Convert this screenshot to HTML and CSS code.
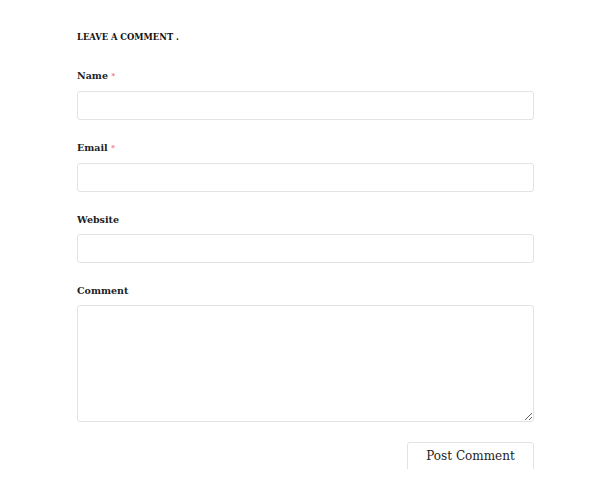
FILE: index.html
```html
<!DOCTYPE html>
<html>
<head>
<meta charset="utf-8">
<link rel="stylesheet" href="styles.css">
</head>
<body>
<div class="page">
  <form class="comment-form">
    <h3 class="title">LEAVE A COMMENT .</h3>
    <div class="field">
      <label class="label">Name <span class="req">*</span></label>
      <input class="input" type="text">
    </div>
    <div class="field">
      <label class="label">Email <span class="req">*</span></label>
      <input class="input" type="text">
    </div>
    <div class="field">
      <label class="label">Website</label>
      <input class="input" type="text">
    </div>
    <div class="field">
      <label class="label">Comment</label>
      <textarea class="textarea"></textarea>
    </div>
    <div class="actions">
      <button class="submit" type="button">Post Comment</button>
    </div>
  </form>
</div>
</body>
</html>
```
FILE: styles.css
```css
html, body {
  margin: 0;
  padding: 0;
  background: #ffffff;
}
.page {
  padding: 29px 66px 0 77px;
  height: 440px;
  overflow: hidden;
}
.comment-form {
  display: flex;
  flex-direction: column;
}
.title {
  margin: 0 0 23px 0;
  font-family: "DejaVu Serif", serif;
  font-weight: bold;
  font-size: 8.4px;
  line-height: 16px;
  color: #111;
}
.field {
  display: flex;
  flex-direction: column;
  margin-bottom: 20px;
}
.label {
  font-family: "DejaVu Serif", serif;
  font-weight: bold;
  font-size: 9.5px;
  line-height: 16px;
  color: #222;
  margin-bottom: 6px;
}
.req {
  color: #e0507a;
  font-size: 8px;
  font-weight: normal;
}
.input, .textarea {
  box-sizing: border-box;
  width: 457px;
  border: 1px solid #e3e3e3;
  border-radius: 3px;
  background: #fff;
  margin: 0;
  padding: 4px 8px;
  outline: none;
}
.input {
  height: 29px;
}
.textarea {
  height: 117px;
  resize: vertical;
}
.actions {
  display: flex;
  justify-content: flex-end;
}
.submit {
  width: 127px;
  height: 36px;
  border: 1px solid #e3e3e3;
  border-radius: 3px;
  background: #fff;
  font-family: "DejaVu Serif", serif;
  font-size: 12px;
  color: #222;
  display: flex;
  align-items: flex-start;
  justify-content: center;
  padding: 6px 0 0 0;
}
```
